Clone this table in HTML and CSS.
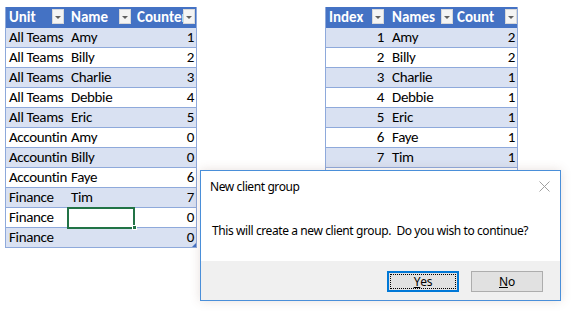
FILE: index.html
```html
<!DOCTYPE html>
<html>
<head>
<meta charset="utf-8">
<link rel="stylesheet" href="styles.css">
</head>
<body>
<div class="sheet">
  <div class="tbl tbl-left">
    <div class="hd">Unit<span class="dd dd-1"></span></div>
    <div class="hd">Name<span class="dd dd-2"></span></div>
    <div class="hd">Counter<span class="dd dd-3"></span></div>

    <div class="c s">All Teams</div><div class="c s">Amy</div><div class="c s n">1</div>
    <div class="c">All Teams</div><div class="c">Billy</div><div class="c n">2</div>
    <div class="c s">All Teams</div><div class="c s">Charlie</div><div class="c s n">3</div>
    <div class="c">All Teams</div><div class="c">Debbie</div><div class="c n">4</div>
    <div class="c s">All Teams</div><div class="c s">Eric</div><div class="c s n">5</div>
    <div class="c">Accountin</div><div class="c">Amy</div><div class="c n">0</div>
    <div class="c s">Accountin</div><div class="c s">Billy</div><div class="c s n">0</div>
    <div class="c">Accountin</div><div class="c">Faye</div><div class="c n">6</div>
    <div class="c s">Finance</div><div class="c s">Tim</div><div class="c s n">7</div>
    <div class="c">Finance</div><div class="c sel"></div><div class="c n">0</div>
    <div class="c s">Finance</div><div class="c s"></div><div class="c s n last">0</div>
  </div>

  <div class="tbl tbl-right">
    <div class="hd">Index<span class="dd dd-4"></span></div>
    <div class="hd">Names<span class="dd dd-5"></span></div>
    <div class="hd">Count<span class="dd dd-6"></span></div>

    <div class="c s n idx">1</div><div class="c s">Amy</div><div class="c s n">2</div>
    <div class="c n idx">2</div><div class="c">Billy</div><div class="c n">2</div>
    <div class="c s n idx">3</div><div class="c s">Charlie</div><div class="c s n">1</div>
    <div class="c n idx">4</div><div class="c">Debbie</div><div class="c n">1</div>
    <div class="c s n idx">5</div><div class="c s">Eric</div><div class="c s n">1</div>
    <div class="c n idx">6</div><div class="c">Faye</div><div class="c n">1</div>
    <div class="c s n idx">7</div><div class="c s">Tim</div><div class="c s n">1</div>
    <div class="c"></div><div class="c"></div><div class="c"></div>
  </div>

  <div class="dialog">
    <div class="dlg-title">
      <span>New client group</span>
      <svg class="close" width="11" height="11" viewBox="0 0 11 11"><path d="M0.5 0.5 L10.5 10.5 M10.5 0.5 L0.5 10.5" stroke="#a0a0a0" stroke-width="1" fill="none"/></svg>
    </div>
    <div class="dlg-msg">This will create a new client group.&nbsp; Do you wish to continue?</div>
    <div class="dlg-foot">
      <button class="btn btn-default"><span class="focus"><u>Y</u>es</span></button>
      <button class="btn"><u>N</u>o</button>
    </div>
  </div>
</div>
</body>
</html>
```

FILE: styles.css
```css
html, body {
  margin: 0;
  padding: 0;
  background: #ffffff;
}

.sheet {
  position: relative;
  width: 573px;
  height: 315px;
  display: flex;
  align-items: flex-start;
  padding: 7px 0 0 5px;
  box-sizing: border-box;
  overflow: hidden;
}

.tbl {
  display: grid;
  font-family: Calibri, Carlito, Lato, "Liberation Sans", sans-serif;
  font-size: 15px;
  color: #000;
  border-left: 1px solid #8ea9db;
  border-right: 1px solid #8ea9db;
}

.tbl-left {
  grid-template-columns: 62px 66px 62px;
  position: relative;
}

.tbl-right {
  grid-template-columns: 63px 65px 63px;
  margin-left: 128px;
}

.hd {
  position: relative;
  height: 21px;
  line-height: 21px;
  background: #4472c4;
  color: #fff;
  font-weight: bold;
  padding-left: 3px;
  overflow: hidden;
  white-space: nowrap;
  box-sizing: border-box;
}

.dd {
  position: absolute;
  right: 3px;
  top: 2px;
  width: 12px;
  height: 15px;
  box-sizing: border-box;
  background: #f4f4f4;
  border: 1px solid #d8d8d8;
}

.dd-1 { right: 4px; }
.dd-3 { right: 1px; }
.dd-4 { right: 5px; }
.dd-5 { right: 1px; }
.dd-6 { right: 0; }

.dd::after {
  content: "";
  position: absolute;
  left: 2px;
  top: 6px;
  border-left: 3px solid transparent;
  border-right: 3px solid transparent;
  border-top: 3px solid #606060;
}

.c {
  position: relative;
  height: 20px;
  line-height: 19px;
  padding: 0 2px 0 3px;
  border-bottom: 1px solid #8ea9db;
  box-sizing: border-box;
  white-space: nowrap;
  letter-spacing: -0.35px;
  background: #ffffff;
}

.c.s {
  background: #d9e1f2;
}

.c.n {
  text-align: right;
}

.c.idx {
  padding-right: 5px;
}

.c.sel {
  outline: 2px solid #217346;
  outline-offset: -1px;
  z-index: 2;
}

.c.sel::after {
  content: "";
  position: absolute;
  right: -3px;
  bottom: -3px;
  width: 5px;
  height: 5px;
  background: #217346;
  border: 1px solid #fff;
  box-sizing: border-box;
}

.c.last::after {
  content: "";
  position: absolute;
  right: 0;
  bottom: 0;
  border-left: 4px solid transparent;
  border-bottom: 4px solid #4472c4;
}

.dialog {
  position: absolute;
  left: 200px;
  top: 170px;
  width: 361px;
  height: 131px;
  box-sizing: border-box;
  border: 1px solid #4a8fd9;
  background: #ffffff;
  box-shadow: 0 0 10px rgba(120, 80, 60, 0.18);
  display: flex;
  flex-direction: column;
  font-family: "Segoe UI", "Noto Sans", "Open Sans", sans-serif;
  font-size: 12px;
  letter-spacing: -0.4px;
  color: #000;
  z-index: 5;
}

.dlg-title {
  height: 30px;
  display: flex;
  align-items: center;
  justify-content: space-between;
  padding: 0 10px 0 9px;
}

.close {
  display: block;
}

.dlg-msg {
  flex: 1;
  display: flex;
  align-items: center;
  padding-left: 11px;
  padding-bottom: 2px;
}

.dlg-foot {
  height: 39px;
  background: #f0f0f0;
  display: flex;
  justify-content: flex-end;
  align-items: flex-start;
  gap: 12px;
  padding: 10px 17px 0 0;
  box-sizing: border-box;
}

.btn {
  width: 72px;
  height: 21px;
  box-sizing: border-box;
  background: #e1e1e1;
  border: 1px solid #adadad;
  font-family: "Segoe UI", "Noto Sans", "Open Sans", sans-serif;
  font-size: 12px;
  letter-spacing: -0.2px;
  color: #000;
  padding: 0;
  margin: 0;
  display: flex;
  align-items: center;
  justify-content: center;
}

.btn-default {
  border: 1px solid #0078d7;
  box-shadow: inset 0 0 0 1px #0078d7;
  padding: 2px;
}

.focus {
  flex: 1;
  align-self: stretch;
  display: flex;
  align-items: center;
  justify-content: center;
  border: 1px dotted #000;
}
```
